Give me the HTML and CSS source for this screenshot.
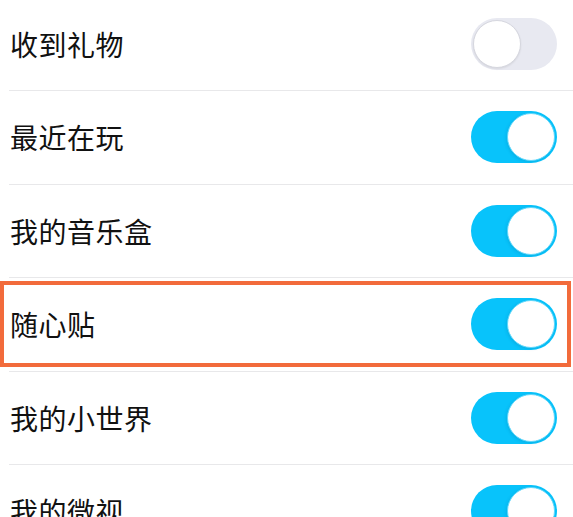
FILE: index.html
```html
<!DOCTYPE html>
<html lang="zh">
<head>
<meta charset="utf-8">
<link rel="stylesheet" href="styles.css">
</head>
<body>
<ul class="list">
  <li class="row"><span class="label">收到礼物</span><span class="switch"></span></li>
  <li class="row"><span class="label">最近在玩</span><span class="switch on"></span></li>
  <li class="row"><span class="label">我的音乐盒</span><span class="switch on"></span></li>
  <li class="row highlighted"><span class="label">随心贴</span><span class="switch on"></span></li>
  <li class="row"><span class="label">我的小世界</span><span class="switch on"></span></li>
  <li class="row"><span class="label">我的微视</span><span class="switch on"></span></li>
</ul>
</body>
</html>
```
FILE: styles.css
```css
html, body {
  margin: 0;
  padding: 0;
  background: #ffffff;
  overflow: hidden;
  height: 517px;
}

.list {
  list-style: none;
  margin: -2.5px 0 0 9px;
  padding: 0;
  font-family: "Noto Sans CJK SC", "Noto Sans", sans-serif;
}

.row {
  position: relative;
  height: 92.5px;
  display: flex;
  align-items: center;
  justify-content: space-between;
  padding: 0 16px 0 1px;
  border-bottom: 1px solid #e8e8ea;
}

.label {
  font-size: 28px;
  color: #111111;
  line-height: 1;
  letter-spacing: 0.5px;
}

.switch {
  position: relative;
  width: 86px;
  height: 52px;
  border-radius: 26px;
  background: #e8e9f1;
  flex: none;
}

.switch::after {
  content: "";
  position: absolute;
  top: 2px;
  left: 2px;
  width: 46px;
  height: 46px;
  border-radius: 50%;
  background: #ffffff;
  border: 1.5px solid #d6d7df;
  box-shadow: 0 1px 2px rgba(0, 0, 0, 0.08);
}

.switch.on {
  background: #08c3fb;
}

.switch.on::after {
  left: auto;
  right: 2px;
  border-color: #5fd7fb;
  box-shadow: -1px 1px 3px rgba(0, 80, 120, 0.15);
}

.highlighted::before {
  content: "";
  position: absolute;
  left: -9px;
  right: 2px;
  top: 3px;
  bottom: 4px;
  border: 4px solid #f26b3b;
  pointer-events: none;
}
```
